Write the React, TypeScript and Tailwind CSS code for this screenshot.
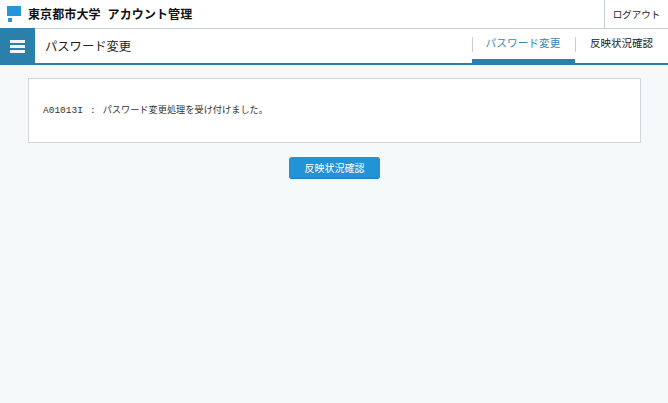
export default function App() {
  return (
    <div className="min-h-[403px] w-full bg-[#f5f9fa] flex flex-col" style={{ fontFamily: '"Noto Sans CJK JP", "Liberation Sans", sans-serif' }}>
      <header className="h-[29px] bg-white border-b border-[#c9ced1] flex items-stretch justify-between">
        <div className="flex items-center pl-[7px]">
          <svg width="14" height="16" viewBox="0 0 14 16" className="mr-[7px]">
            <rect x="0" y="0" width="14" height="10" fill="#2596da" />
            <rect x="1" y="12" width="4" height="4" fill="#2596da" />
          </svg>
          <span className="text-[12px] font-bold text-[#111] leading-none tracking-[0.1px]">東京都市大学<span className="ml-[7px]">アカウント管理</span></span>
        </div>
        <div className="w-[64px] border-l border-[#c9ced1] flex items-center justify-center text-[9.5px] text-[#222]">ログアウト</div>
      </header>
      <nav className="h-[36px] bg-white border-b-2 border-[#2a80ab] flex items-stretch justify-between">
        <div className="flex items-center">
          <div className="w-[35px] h-[36px] bg-[#2a80ab] flex flex-col items-center justify-center gap-[2px]">
            <span className="block w-[15px] h-[3px] bg-[#eef5f8]" />
            <span className="block w-[15px] h-[3px] bg-[#eef5f8]" />
            <span className="block w-[15px] h-[3px] bg-[#eef5f8]" />
          </div>
          <span className="ml-[10px] text-[12.3px] text-[#222]">パスワード変更</span>
        </div>
        <div className="flex items-stretch">
          <div className="relative w-[104px] flex items-center justify-center text-[10.7px] text-[#3a89b2]">
            <span className="absolute left-[1px] top-[8px] h-[15px] w-px bg-[#c9ced1]" />
            <span className="pb-[6px]">パスワード変更</span>
            <span className="absolute left-[1px] right-0 bottom-0 h-[4px] bg-[#2a80ab]" />
          </div>
          <div className="relative w-[93px] flex items-center justify-center text-[10.5px] text-[#222]">
            <span className="absolute left-0 top-[8px] h-[15px] w-px bg-[#c9ced1]" />
            <span className="pb-[6px]">反映状況確認</span>
          </div>
        </div>
      </nav>
      <main className="pl-[28px] pr-[27px] pt-[13px] flex flex-col items-center">
        <div className="w-full h-[65px] bg-white border border-[#d3d7d9] flex items-center pl-[14px] pt-[1px] text-[9.2px] text-[#333]">
          <span>
            <span className="text-[9.5px]" style={{ fontFamily: '"Liberation Mono", monospace' }}>A01013I</span>
            <span className="ml-[7px] text-[9.5px]" style={{ fontFamily: '"Liberation Mono", monospace' }}>:</span>
            <span className="ml-[7px]">パスワード変更処理を受け付けました。</span>
          </span>
        </div>
        <button className="mt-[14px] w-[91px] h-[22px] rounded-[3px] bg-[#2393d8] border-b border-[#1c7dbb] text-white text-[10px] flex items-center justify-center">反映状況確認</button>
      </main>
    </div>
  );
}
